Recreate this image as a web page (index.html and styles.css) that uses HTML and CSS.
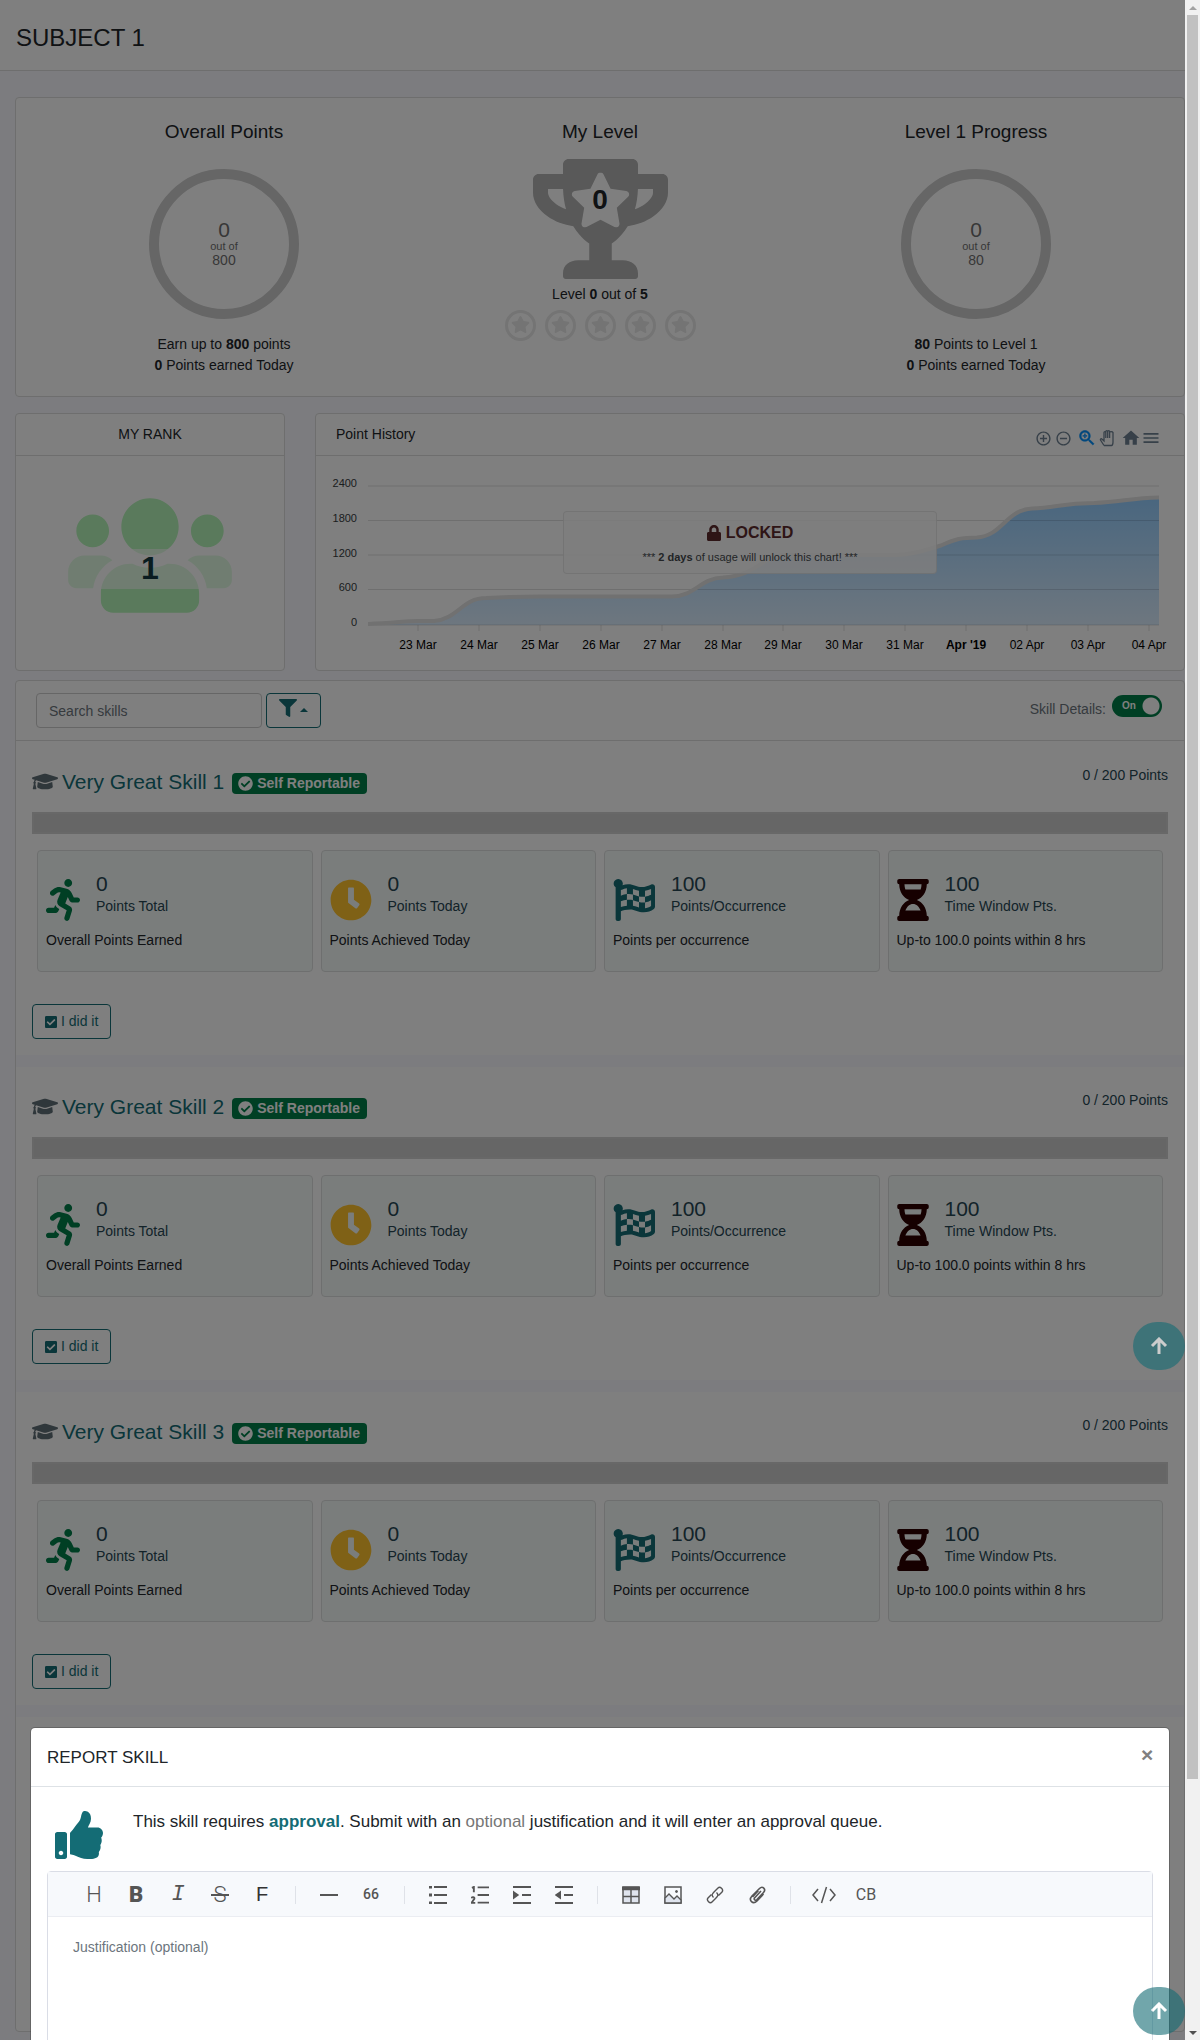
FILE: index.html
```html
<!DOCTYPE html>
<html lang="en">
<head>
<meta charset="utf-8">
<title>Subject 1</title>
<link rel="stylesheet" href="styles.css">
</head>
<body>
<svg width="0" height="0" class="sprite" aria-hidden="true">
  <symbol id="i-star" viewBox="0 0 576 512"><path d="M259.3 17.8L194 150.2 47.9 171.5c-26.2 3.8-36.7 36.1-17.7 54.6l105.7 103-25 145.5c-4.5 26.3 23.2 46 46.4 33.7L288 439.6l130.7 68.7c23.2 12.2 50.9-7.4 46.4-33.7l-25-145.5 105.7-103c19-18.5 8.5-50.8-17.7-54.6L382 150.2 316.7 17.8c-11.7-23.6-45.6-23.9-57.4 0z"/></symbol>
  <symbol id="i-level" viewBox="0 0 31 31"><circle cx="15.5" cy="15.5" r="14" fill="none" stroke="currentColor" stroke-width="3"/><use href="#i-star" x="6" y="6" width="19" height="17"/></symbol>
  <symbol id="i-cap" viewBox="0 0 640 512"><path d="M622.34 153.2L343.4 67.5c-15.2-4.67-31.6-4.67-46.79 0L17.66 153.2c-23.54 7.23-23.54 38.36 0 45.59l48.63 14.94c-10.67 13.19-17.23 29.28-17.88 46.9C38.78 266.15 32 276.11 32 288c0 10.78 5.68 19.85 13.86 25.65L20.33 428.53C18.11 438.52 25.71 448 35.94 448h56.11c10.24 0 17.84-9.48 15.62-19.47L82.14 313.65C90.32 307.85 96 298.78 96 288c0-11.57-6.47-21.25-15.66-26.87.76-15.02 8.44-28.3 20.69-36.72L296.6 284.5c9.06 2.78 26.44 6.25 46.79 0l278.95-85.7c23.55-7.24 23.55-38.36 0-45.6zM352.79 315.09c-28.53 8.76-52.84 3.92-65.59 0l-145.02-44.55L128 384c0 35.35 85.96 64 192 64s192-28.65 192-64l-14.18-113.47-145.03 44.56z"/></symbol>
  <symbol id="i-run" viewBox="0 0 416 512"><path d="M272 96c26.51 0 48-21.49 48-48S298.51 0 272 0s-48 21.49-48 48 21.49 48 48 48zM113.69 317.47l-14.8 34.52H32c-17.67 0-32 14.33-32 32s14.33 32 32 32h77.45c19.25 0 36.58-11.44 44.11-29.09l8.79-20.52-10.67-6.3c-17.32-10.23-30.06-25.37-37.99-42.61zM384 223.99h-44.03l-26.06-53.25c-12.5-25.55-35.45-44.23-61.78-50.94l-71.08-21.14c-28.3-6.8-57.77-.55-80.84 17.14l-39.67 30.41c-14.03 10.75-16.69 30.83-5.92 44.86s30.84 16.66 44.86 5.92l39.69-30.41c7.67-5.89 17.44-8 25.27-6.14l14.7 4.37-37.46 87.39c-12.62 29.48-1.31 64.01 26.3 80.31l84.98 50.17-27.47 87.73c-5.28 16.86 4.11 34.82 20.97 40.09 3.19 1 6.41 1.48 9.58 1.48 13.61 0 26.23-8.77 30.52-22.45l31.64-101.06c5.91-20.77-2.89-43.08-21.64-54.39l-61.24-36.14 31.31-78.28 20.27 41.43c8 16.34 24.92 26.89 43.11 26.89H384c17.67 0 32-14.33 32-32s-14.33-31.99-32-31.99z"/></symbol>
  <symbol id="i-clock" viewBox="0 0 512 512"><path d="M256 8C119 8 8 119 8 256s111 248 248 248 248-111 248-248S393 8 256 8zm57.1 350.1L224.9 294c-3.1-2.3-4.9-5.9-4.9-9.7V116c0-6.6 5.4-12 12-12h48c6.6 0 12 5.4 12 12v137.7l63.5 46.2c5.4 3.9 6.5 11.4 2.6 16.8l-28.2 38.8c-3.9 5.3-11.4 6.5-16.8 2.6z"/></symbol>
  <symbol id="i-flag" viewBox="0 0 512 512"><path d="M243.2 189.9V258c26.1 5.9 49.3 15.6 73.6 22.3v-68.2c-26-5.8-49.4-15.5-73.6-22.2zm223.3-123c-34.3 15.9-76.5 31.9-117 31.9C296 98.8 251.7 64 184.3 64c-25 0-47.3 4.4-68 12 2.8-7.3 4.1-15.2 3.6-23.6C118.1 24 94.8 1.2 66.3 0 34.3-1.3 8 24.3 8 56c0 19 9.5 35.8 24 45.9V488c0 13.3 10.7 24 24 24h16c13.3 0 24-10.7 24-24v-94.4c28.3-12.1 63.6-22.1 114.4-22.1 53.6 0 97.8 34.8 165.2 34.8 48.2 0 86.7-16.3 122.5-40.9 8.7-6 13.8-15.8 13.8-26.4V95.9c.1-23.3-24.2-38.8-45.4-29zM169.6 325.5c-25.8 2.7-50 8.2-73.6 16.6v-70.5c26.2-9.3 47.5-15 73.6-17.4v71.3zM464 191c-23.6 9.8-46.3 19.5-73.6 23.9V286c24.8-3.4 51.4-11.8 73.6-26v70.5c-25.1 16.1-48.5 24.7-73.6 27.1V286c-27 3.7-47.9 1.5-73.6-5.6v67.4c-23.9-7.4-47.3-16.7-73.6-21.3V258c-19.7-4.4-40.8-6.8-73.6-3.8v-70c-22.4 3.1-44.6 10.2-73.6 20.9v-70.5c33.2-12.2 50.1-19.8 73.6-22v71.6c27-3.7 48.4-1.3 73.6 5.7v-67.4c23.7 7.4 47.2 16.7 73.6 21.3v68.4c23.7 5.3 47.6 6.9 73.6 2.7V143c27-4.8 52.3-13.6 73.6-22.5z"/></symbol>
  <symbol id="i-glass" viewBox="0 0 384 512"><path d="M360 0H24C10.745 0 0 10.745 0 24v16c0 13.255 10.745 24 24 24 0 90.965 51.016 167.734 120.842 192C75.016 280.266 24 357.035 24 448c-13.255 0-24 10.745-24 24v16c0 13.255 10.745 24 24 24h336c13.255 0 24-10.745 24-24v-16c0-13.255-10.745-24-24-24 0-90.965-51.016-167.734-120.842-192C308.984 231.734 360 154.965 360 64c13.255 0 24-10.745 24-24V24c0-13.255-10.745-24-24-24zm-75.078 384H99.08c17.059-46.797 52.096-80 92.92-80 40.821 0 75.862 33.196 92.922 80zm.019-256H99.078C91.988 108.548 88 86.748 88 64h208c0 22.805-3.987 44.587-11.059 64z"/></symbol>
  <symbol id="i-ok" viewBox="0 0 512 512"><path d="M504 256c0 136.967-111.033 248-248 248S8 392.967 8 256 119.033 8 256 8s248 111.033 248 248zM227.314 387.314l184-184c6.248-6.248 6.248-16.379 0-22.627l-22.627-22.627c-6.248-6.249-16.379-6.249-22.628 0L216 308.118l-70.059-70.059c-6.248-6.248-16.379-6.248-22.628 0l-22.627 22.627c-6.248 6.248-6.248 16.379 0 22.627l104 104c6.249 6.249 16.379 6.249 22.628.001z"/></symbol>
  <symbol id="i-check" viewBox="0 0 448 512"><path d="M400 480H48c-26.51 0-48-21.49-48-48V80c0-26.51 21.49-48 48-48h352c26.51 0 48 21.49 48 48v352c0 26.51-21.49 48-48 48zm-204.686-98.059l184-184c6.248-6.248 6.248-16.379 0-22.627l-22.627-22.627c-6.248-6.248-16.379-6.249-22.628 0L184 302.745l-70.059-70.059c-6.248-6.248-16.379-6.248-22.628 0l-22.627 22.627c-6.248 6.248-6.248 16.379 0 22.627l104 104c6.249 6.25 16.379 6.25 22.628.001z"/></symbol>
  <symbol id="i-up" viewBox="0 0 18 18"><path d="M9 17V2M2 9l7-7 7 7" fill="none" stroke="currentColor" stroke-width="3"/></symbol>
</svg>

<div class="window">
  <div class="view">
    <header class="page-head"><h1>SUBJECT 1</h1></header>

    <main class="content">
      <section class="card summary">
        <div class="summary-col">
          <h2>Overall Points</h2>
          <div class="ring"><span class="ring-value">0</span><span class="ring-of">out of</span><span class="ring-total">800</span></div>
          <p>Earn up to <b>800</b> points</p>
          <p><b>0</b> Points earned Today</p>
        </div>
        <div class="summary-col">
          <h2>My Level</h2>
          <div class="trophy">
            <svg viewBox="0 0 576 512" width="135" height="120" aria-hidden="true"><path fill="#b2b2b2" d="M552 64H448V24c0-13.3-10.7-24-24-24H152c-13.3 0-24 10.700-24 24v40H24C10.700 64 0 74.700 0 88v56c0 35.700 22.500 72.400 61.900 100.700 31.500 22.700 69.800 37.100 110 41.700C203.300 338.500 240 360 240 360v72h-48c-35.300 0-64 20.700-64 56v12c0 6.600 5.400 12 12 12h296c6.600 0 12-5.400 12-12v-12c0-35.300-28.700-56-64-56h-48v-72s36.700-21.500 68.100-73.600c40.300-4.600 78.600-19 110-41.700 39.300-28.300 61.900-65 61.900-100.700V88c0-13.300-10.700-24-24-24zM99.300 192.800C74.900 175.200 64 155.600 64 144v-16h64.200c1 32.600 5.800 61.200 12.800 86.200-15.100-5.200-29.200-12.400-41.700-21.400zM512 144c0 16.100-17.700 36.100-35.300 48.800-12.500 9-26.700 16.200-41.800 21.400 7-25 11.800-53.600 12.800-86.200H512v16z"/><use href="#i-star" x="156" y="58" width="264" height="234" fill="#fff"/></svg>
            <strong>0</strong>
          </div>
          <p class="level">Level <b>0</b> out of <b>5</b></p>
          <div class="stars">
            <svg><use href="#i-level"/></svg><svg><use href="#i-level"/></svg><svg><use href="#i-level"/></svg><svg><use href="#i-level"/></svg><svg><use href="#i-level"/></svg>
          </div>
        </div>
        <div class="summary-col">
          <h2>Level 1 Progress</h2>
          <div class="ring"><span class="ring-value">0</span><span class="ring-of">out of</span><span class="ring-total">80</span></div>
          <p><b>80</b> Points to Level 1</p>
          <p><b>0</b> Points earned Today</p>
        </div>
      </section>

      <div class="panels">
        <section class="card">
          <div class="card-head rank-head"><h3>MY RANK</h3></div>
          <div class="rank">
            <div class="rank-icon">
              <svg viewBox="0 0 640 512" width="164" height="131" aria-hidden="true"><path fill="#b4f4b8" d="M96 224c35.300 0 64-28.700 64-64s-28.700-64-64-64-64 28.700-64 64 28.700 64 64 64zm448 0c35.300 0 64-28.700 64-64s-28.700-64-64-64-64 28.700-64 64 28.700 64 64 64zm32 32h-64c-17.600 0-33.500 7.100-45.100 18.600 40.300 22.100 68.900 62 75.100 109.400h66c17.700 0 32-14.300 32-32v-32c0-35.300-28.700-64-64-64zm-256 0c61.900 0 112-50.100 112-112S381.900 32 320 32 208 82.100 208 144s50.100 112 112 112zm76.800 32h-8.300c-20.800 10-43.900 16-68.500 16s-47.600-6-68.500-16h-8.300C179.600 288 128 339.600 128 403.200V432c0 26.500 21.500 48 48 48h288c26.500 0 48-21.500 48-48v-28.800c0-63.600-51.600-115.200-115.200-115.200zm-223.700-13.400C161.500 263.100 145.600 256 128 256H64c-35.300 0-64 28.700-64 64v32c0 17.700 14.300 32 32 32h65.900c6.300-47.400 34.900-87.300 75.200-109.400z"/></svg>
              <strong>1</strong>
            </div>
          </div>
        </section>

        <section class="card">
          <div class="card-head">
            <h3>Point History</h3>
            <div class="chart-tools">
              <button aria-label="Zoom in"><svg viewBox="0 0 24 24" width="17" height="17"><path d="M13 7h-2v4H7v2h4v4h2v-4h4v-2h-4V7zm-1-5C6.480 2 2 6.480 2 12s4.480 10 10 10 10-4.480 10-10S17.520 2 12 2zm0 18c-4.410 0-8-3.590-8-8s3.590-8 8-8 8 3.590 8 8-3.590 8-8 8z"/></svg></button>
              <button aria-label="Zoom out"><svg viewBox="0 0 24 24" width="17" height="17"><path d="M7 11v2h10v-2H7zm5-9C6.480 2 2 6.480 2 12s4.480 10 10 10 10-4.480 10-10S17.520 2 12 2zm0 18c-4.410 0-8-3.590-8-8s3.590-8 8-8 8 3.590 8 8-3.590 8-8 8z"/></svg></button>
              <button class="active" aria-label="Selection zoom"><svg viewBox="0 0 24 24" width="20" height="20"><path d="M15.500 14h-.79l-.28-.27C15.410 12.590 16 11.110 16 9.500 16 5.910 13.090 3 9.500 3S3 5.910 3 9.500 5.910 16 9.500 16c1.610 0 3.090-.59 4.230-1.570l.27.28v.79l5 4.990L20.490 19l-4.990-5zm-6 0C7.010 14 5 11.990 5 9.500S7.010 5 9.500 5 14 7.010 14 9.500 11.990 14 9.500 14zm.5-7H9v2H7v1h2v2h1v-2h2V9h-2z" stroke="currentColor" stroke-width=".6"/></svg></button>
              <button aria-label="Pan"><svg viewBox="0 0 16 18" width="16" height="18"><path d="M5 16.500L1.500 11C1 9.500 2.500 9.500 3.200 10.300L5 12V3.500M5 10V3.500c0-1.200 1.800-1.200 1.800 0V9V2.500c0-1.200 1.900-1.200 1.900 0V9V2.500c0-1.200 1.900-1.200 1.900 0V9V3.500M10.600 9V3.500c0-1.200 3-1 3.400 0V13c0 2-1 3.500-1.500 3.500H5" fill="none" stroke="#6e8192" stroke-width="1.300"/></svg></button>
              <button aria-label="Reset"><svg viewBox="0 0 24 24" width="20" height="20"><path d="M10 20v-6h4v6h5v-8h3L12 3 2 12h3v8z"/></svg></button>
              <button aria-label="Menu"><svg viewBox="0 0 24 24" width="20" height="20"><path d="M3 18h18v-2H3v2zm0-5h18v-2H3v2zm0-7v2h18V6H3z"/></svg></button>
            </div>
          </div>
          <div class="chart">
            <svg class="plot" viewBox="0 0 868 214" role="img">
              <defs><linearGradient id="area" x1="0" y1="0" x2="0" y2="1"><stop offset="0" stop-color="#93cdff"/><stop offset="1" stop-color="#dceeff"/></linearGradient></defs>
              <path fill="url(#area)" d="M52 168C78 167 90 165 102 165H118C142 163 146 142 170 142C190 141 200 140.500 224 140.500H356C380 140 384 122 407 121.500C440 120 445 101 467 99H580C600 99 612 93 625 89.500C640 83 645 81.500 661 81.500C686 80 690 54 716 52.500C740 52 745 47 778 47C805 46 815 42 843 41.500V169H52z"/>
              <path class="grid" d="M52 30H843M52 64.500H843M52 99H843M52 133.500H843M52 169H843M102 169V175M163 169V175M224 169V175M285 169V175M346 169V175M407 169V175M467 169V175M528 169V175M589 169V175M650 169V175M711 169V175M772 169V175M833 169V175"/>
              <path class="line" d="M52 168C78 167 90 165 102 165H118C142 163 146 142 170 142C190 141 200 140.500 224 140.500H356C380 140 384 122 407 121.500C440 120 445 101 467 99H580C600 99 612 93 625 89.500C640 83 645 81.500 661 81.500C686 80 690 54 716 52.500C740 52 745 47 778 47C805 46 815 42 843 41.500"/>
              <g class="y-labels"><text x="41" y="31">2400</text><text x="41" y="66">1800</text><text x="41" y="101">1200</text><text x="41" y="135">600</text><text x="41" y="170">0</text></g>
              <g class="x-labels"><text x="102" y="193">23 Mar</text><text x="163" y="193">24 Mar</text><text x="224" y="193">25 Mar</text><text x="285" y="193">26 Mar</text><text x="346" y="193">27 Mar</text><text x="407" y="193">28 Mar</text><text x="467" y="193">29 Mar</text><text x="528" y="193">30 Mar</text><text x="589" y="193">31 Mar</text><text x="650" y="193" class="month">Apr '19</text><text x="711" y="193">02 Apr</text><text x="772" y="193">03 Apr</text><text x="833" y="193">04 Apr</text></g>
            </svg>
            <div class="locked">
              <div class="locked-title"><svg viewBox="0 0 448 512" width="14" height="16"><path d="M400 224h-24v-72C376 68.200 307.800 0 224 0S72 68.200 72 152v72H48c-26.500 0-48 21.500-48 48v192c0 26.500 21.500 48 48 48h352c26.500 0 48-21.500 48-48V272c0-26.500-21.500-48-48-48zm-104 0H152v-72c0-39.700 32.300-72 72-72s72 32.300 72 72v72z"/></svg>LOCKED</div>
              <div class="locked-note">*** <b>2 days</b> of usage will unlock this chart! ***</div>
            </div>
          </div>
        </section>
      </div>

      <section class="card skills">
        <div class="skills-head">
          <input class="search" type="text" placeholder="Search skills" aria-label="Search skills">
          <button class="outline filter" aria-label="Filter"><svg viewBox="0 0 512 512" width="18" height="18"><path d="M487.976 0H24.028C2.710 0-8.047 25.866 7.058 40.971L192 225.941V432c0 7.831 3.821 15.170 10.237 19.662l80 55.980C298.020 518.690 320 507.493 320 487.980V225.941l184.947-184.970C520.021 25.896 509.338 0 487.976 0z"/></svg><i></i></button>
          <label class="details">Skill Details:<span class="switch"><input type="checkbox" checked><span>On</span></span></label>
        </div>
        <div class="skill-list">
          <article class="skill">
            <div class="skill-top">
              <h3><svg class="cap"><use href="#i-cap"/></svg><a href="#">Very Great Skill 1</a><span class="badge"><svg><use href="#i-ok"/></svg>Self Reportable</span></h3>
              <span class="points">0 / 200 Points</span>
            </div>
            <div class="bar"></div>
            <div class="stats">
              <div class="stat"><div class="stat-main"><svg class="run"><use href="#i-run"/></svg><div><div class="num">0</div><div>Points Total</div></div></div><p>Overall Points Earned</p></div>
              <div class="stat"><div class="stat-main"><svg class="clock"><use href="#i-clock"/></svg><div><div class="num">0</div><div>Points Today</div></div></div><p>Points Achieved Today</p></div>
              <div class="stat"><div class="stat-main"><svg class="flag"><use href="#i-flag"/></svg><div><div class="num">100</div><div>Points/Occurrence</div></div></div><p>Points per occurrence</p></div>
              <div class="stat"><div class="stat-main"><svg class="glass"><use href="#i-glass"/></svg><div><div class="num">100</div><div>Time Window Pts.</div></div></div><p>Up-to 100.0 points within 8 hrs</p></div>
            </div>
            <button class="outline did"><svg><use href="#i-check"/></svg>I did it</button>
          </article>
          <article class="skill">
            <div class="skill-top">
              <h3><svg class="cap"><use href="#i-cap"/></svg><a href="#">Very Great Skill 2</a><span class="badge"><svg><use href="#i-ok"/></svg>Self Reportable</span></h3>
              <span class="points">0 / 200 Points</span>
            </div>
            <div class="bar"></div>
            <div class="stats">
              <div class="stat"><div class="stat-main"><svg class="run"><use href="#i-run"/></svg><div><div class="num">0</div><div>Points Total</div></div></div><p>Overall Points Earned</p></div>
              <div class="stat"><div class="stat-main"><svg class="clock"><use href="#i-clock"/></svg><div><div class="num">0</div><div>Points Today</div></div></div><p>Points Achieved Today</p></div>
              <div class="stat"><div class="stat-main"><svg class="flag"><use href="#i-flag"/></svg><div><div class="num">100</div><div>Points/Occurrence</div></div></div><p>Points per occurrence</p></div>
              <div class="stat"><div class="stat-main"><svg class="glass"><use href="#i-glass"/></svg><div><div class="num">100</div><div>Time Window Pts.</div></div></div><p>Up-to 100.0 points within 8 hrs</p></div>
            </div>
            <button class="outline did"><svg><use href="#i-check"/></svg>I did it</button>
            <button class="to-top in-list" aria-label="Back to top"><svg><use href="#i-up"/></svg></button>
          </article>
          <article class="skill">
            <div class="skill-top">
              <h3><svg class="cap"><use href="#i-cap"/></svg><a href="#">Very Great Skill 3</a><span class="badge"><svg><use href="#i-ok"/></svg>Self Reportable</span></h3>
              <span class="points">0 / 200 Points</span>
            </div>
            <div class="bar"></div>
            <div class="stats">
              <div class="stat"><div class="stat-main"><svg class="run"><use href="#i-run"/></svg><div><div class="num">0</div><div>Points Total</div></div></div><p>Overall Points Earned</p></div>
              <div class="stat"><div class="stat-main"><svg class="clock"><use href="#i-clock"/></svg><div><div class="num">0</div><div>Points Today</div></div></div><p>Points Achieved Today</p></div>
              <div class="stat"><div class="stat-main"><svg class="flag"><use href="#i-flag"/></svg><div><div class="num">100</div><div>Points/Occurrence</div></div></div><p>Points per occurrence</p></div>
              <div class="stat"><div class="stat-main"><svg class="glass"><use href="#i-glass"/></svg><div><div class="num">100</div><div>Time Window Pts.</div></div></div><p>Up-to 100.0 points within 8 hrs</p></div>
            </div>
            <button class="outline did"><svg><use href="#i-check"/></svg>I did it</button>
          </article>
          <div class="skill-rest"></div>
        </div>
      </section>
    </main>

    <div class="backdrop"></div>
    <div class="modal-layer">
      <div class="modal" role="dialog" aria-labelledby="report-title">
        <div class="modal-head"><h2 id="report-title">REPORT SKILL</h2><button class="close" aria-label="Close">×</button></div>
        <div class="modal-body">
          <div class="notice">
            <svg viewBox="0 0 512 512" width="48" height="48" aria-hidden="true"><path d="M104 224H24c-13.255 0-24 10.745-24 24v240c0 13.255 10.745 24 24 24h80c13.255 0 24-10.745 24-24V248c0-13.255-10.745-24-24-24zM64 472c-13.255 0-24-10.745-24-24s10.745-24 24-24 24 10.745 24 24-10.745 24-24 24zM384 81.452c0 42.416-25.970 66.208-33.277 94.548h101.723c33.397 0 59.397 27.746 59.553 58.098.084 17.938-7.546 37.249-19.439 49.197l-.11.11c9.836 23.337 8.237 56.037-9.308 79.469 8.681 25.895-.069 57.704-16.382 74.757 4.298 17.598 2.244 32.575-6.148 44.632C440.202 511.587 389.616 512 346.839 512l-2.845-.001c-48.287-.017-87.806-17.598-119.560-31.725-15.957-7.099-36.821-15.887-52.651-16.178-6.540-.12-11.783-5.457-11.783-11.998v-213.770c0-3.200 1.282-6.271 3.558-8.521 39.614-39.144 56.648-80.587 89.117-113.111 14.804-14.832 20.188-37.236 25.393-58.902C282.515 39.293 291.817 0 312 0c24 0 72 8 72 81.452z"/></svg>
            <p>This skill requires <b>approval</b>. Submit with an <span>optional</span> justification and it will enter an approval queue.</p>
          </div>
          <div class="editor">
            <div class="tools">
              <div class="tool-group">
                <button class="t-h">H</button><button class="t-b">B</button><button class="t-i">I</button><button class="t-s">S</button><button class="t-f">F</button>
              </div>
              <div class="tool-group">
                <button aria-label="Line"><svg viewBox="0 0 18 18"><path d="M0 9h18"/></svg></button><button class="t-q">66</button>
              </div>
              <div class="tool-group">
                <button aria-label="Bulleted list"><svg viewBox="0 0 18 18"><path d="M5 1h13M5 9h13M5 17h13"/><path d="M0 1h3M0 9h3M0 17h3" stroke-width="3"/></svg></button>
                <button aria-label="Numbered list"><svg viewBox="-1 0 19 18"><path d="M6 1h12M6 9h12M6 17h12M0 1.500L2 .5V6M-.5 12.500c.5-2 3.500-1.500 3 .5L-.5 17.300H3.500"/></svg></button>
                <button aria-label="Indent"><svg viewBox="0 0 18 18"><path d="M0 1h18M9 9h9M0 17h18"/><path d="M1 6.500L4.500 9 1 11.500z" fill="#555"/></svg></button>
                <button aria-label="Outdent"><svg viewBox="0 0 18 18"><path d="M0 1h18M9 9h9M0 17h18"/><path d="M5 6.500L1.500 9 5 11.500z" fill="#555"/></svg></button>
              </div>
              <div class="tool-group">
                <button aria-label="Table"><svg viewBox="0 0 18 18"><path d="M1 1h16v16H1zM1 10.500h16M9 4v13" fill="#dfe4ee" stroke-width="1.500"/><path d="M0 2.500h18" stroke-width="3.500"/></svg></button>
                <button aria-label="Image"><svg viewBox="0 0 18 18"><path d="M1 1h16v16H1z" fill="none" stroke-width="1.500"/><path d="M1 12l4-4 5 5 3-3 4 4v3H1z" fill="#dfe4ee" stroke-width="1.300"/><circle cx="12.500" cy="5.500" r="1" fill="#555" stroke-width="1"/></svg></button>
                <button aria-label="Link"><svg viewBox="0 0 18 18"><path d="M7.500 11.500C5 9 6.500 7.500 8 6l4-4c2-2 6 1.500 4 4l-3.500 3.500M10.500 6.500c2.500 2.500 1 4 -.5 5.500l-4 4c-2 2-6-1.500-4-4l3.500-3.500" fill="none" stroke-width="1.400"/></svg></button>
                <button aria-label="Attachment"><svg viewBox="0 0 18 18"><path d="M13 5L6.500 12c-1 1.500 1 3 2.200 1.800L15.500 6.500c3-3.500-1-7-4-4L4 10c-4 4.500 1 9 5 5l6.500-7M10.500 4.500L4.500 11" fill="none" stroke-width="1.600"/></svg></button>
              </div>
              <div class="tool-group">
                <button aria-label="Code"><svg class="wide" viewBox="0 0 24 18"><path d="M6 3L1 9l5 6M18 3l5 6-5 6M14.500 1l-5 16" fill="none" stroke-width="1.500"/></svg></button><button class="t-cb">CB</button>
              </div>
            </div>
            <textarea placeholder="Justification (optional)" aria-label="Justification"></textarea>
          </div>
        </div>
      </div>
      <button class="to-top in-modal" aria-label="Back to top"><svg><use href="#i-up"/></svg></button>
    </div>
  </div>
  <div class="scrollbar" aria-hidden="true">
    <i class="arrow-up"></i>
    <div class="track"><div class="thumb"></div></div>
    <i class="arrow-down"></i>
  </div>
</div>
</body>
</html>
```
FILE: styles.css
```css
* { box-sizing: border-box; }
body { margin: 0; background: #f8f9fe; color: #212529; font: 14px/21px "Liberation Sans", Arial, sans-serif; }
h1, h2, h3, p { margin: 0; font-weight: 400; }
button, input, textarea { font: inherit; }
button { padding: 0; border: 0; background: none; }
svg { display: block; fill: currentColor; }
.sprite { position: absolute; }

.window { display: flex; height: 100vh; overflow: hidden; }
.view { position: relative; flex: 1; min-width: 0; overflow: hidden; }

/* scrollbar */
.scrollbar { flex: 0 0 15px; display: flex; flex-direction: column; align-items: center; background: #f1f1f1; }
.track { flex: 1; width: 11px; }
.thumb { height: calc(88% - 5px); background: #c1c1c1; }
.arrow-up, .arrow-down { height: 15px; display: flex; align-items: center; }
.arrow-up::before, .arrow-down::before { content: ""; border: 4px solid transparent; }
.arrow-up::before { border-top: 0; border-bottom-color: #a3a3a3; }
.arrow-down::before { border-bottom: 0; border-top-color: #505050; }

/* page */
.page-head { padding: 24px 16px 18px; background: #fff; border-bottom: 1px solid #dcdcdc; }
.page-head h1 { font-size: 24px; line-height: 28px; }
.content { padding: 26px 0 8px 15px; }
.card { background: #fff; border: 1px solid #dcdcdc; border-radius: 4px; }

.summary { display: grid; grid-template-columns: repeat(3, 1fr); padding: 22px 20px 20px; text-align: center; }
.summary-col { display: flex; flex-direction: column; align-items: center; }
.summary h2 { font-size: 19px; line-height: 24px; }
.ring { width: 150px; height: 150px; margin: 25px 0 15px; border: 10px solid #ccc; border-radius: 50%; display: flex; flex-direction: column; align-items: center; justify-content: center; color: #6f6f6f; }
.ring-value { font-size: 21px; line-height: 20px; }
.ring-of { font-size: 11px; line-height: 12px; }
.ring-total { line-height: 16px; }
.trophy { position: relative; margin-top: 15px; }
.trophy strong { position: absolute; inset: 25px 0 auto; font-size: 28px; line-height: 32px; }
.level { margin: 5px 0; }
.stars { display: flex; gap: 9px; color: #e8e8e8; }
.stars svg { width: 31px; height: 31px; }

.panels { display: grid; grid-template-columns: minmax(200px, 270px) minmax(0, 1fr); gap: 30px; margin: 16px 0 9px; }
.card-head { display: flex; justify-content: space-between; align-items: flex-start; height: 42px; padding: 10px 23px 0 20px; border-bottom: 1px solid #dcdcdc; }
.card-head h3 { font-size: 14px; }
.card-head.rank-head { justify-content: center; padding-right: 20px; }
.rank { display: flex; justify-content: center; padding-top: 34px; }
.rank-icon { position: relative; }
.rank-icon strong { position: absolute; inset: 59px 0 auto; height: 40px; background: rgba(255,255,255,.6); color: #143840; font-size: 32px; line-height: 38px; text-align: center; }

.chart-tools { display: flex; padding-top: 4px; color: #6e8192; }
.chart-tools button { width: 20px; height: 20px; display: flex; align-items: center; justify-content: center; color: inherit; }
.chart-tools button:nth-child(3), .chart-tools button:nth-child(5) { margin-left: 4px; }
.chart-tools button.active { color: #008ffb; }
.chart { position: relative; }
.plot { width: 100%; height: auto; }
.grid { stroke: #000; stroke-opacity: .13; fill: none; }
.line { stroke: #e2e2e2; stroke-width: 4; fill: none; }
.y-labels { font-size: 11px; fill: #373d3f; text-anchor: end; }
.x-labels { font-size: 12px; fill: #000; text-anchor: middle; }
.month { font-weight: 700; }
.locked { position: absolute; top: 55px; left: 50%; width: 374px; margin-left: -187px; padding: 11px 0 8px; border: 1px solid rgba(0,0,0,.08); border-radius: 4px; background: rgba(252,252,252,.85); text-align: center; }
.locked-title { display: flex; justify-content: center; align-items: center; gap: 5px; font-size: 16px; line-height: 20px; font-weight: 700; color: #5c2a2c; }
.locked-note { margin-top: 6px; font-size: 11px; line-height: 16px; color: #45494d; }

/* skills */
.skills-head { display: flex; gap: 4px; align-items: flex-start; padding: 12px 22px 12px 20px; border-bottom: 1px solid #dcdcdc; }
.search { width: 226px; height: 35px; padding: 0 12px; border: 1px solid #ccc; border-radius: 4px; background: #fff; }
.search::placeholder { color: #6c757d; opacity: 1; }
.outline { display: flex; align-items: center; justify-content: center; height: 35px; border: 1px solid #146c75; border-radius: 4px; color: #146c75; }
.filter { width: 55px; gap: 3px; padding-bottom: 5px; }
.filter i { margin-top: 4px; border: 4px solid transparent; border-top: 0; border-bottom-color: #146c75; }
.details { display: flex; gap: 6px; margin-left: auto; padding-top: 2px; line-height: 28px; color: #6c757d; }
.switch { position: relative; width: 50px; height: 22px; color: #fff; font-size: 10px; line-height: 22px; font-weight: 700; }
.switch input { appearance: none; display: block; width: 50px; height: 22px; margin: 0; border-radius: 11px; background: radial-gradient(circle 9px at 39px 11px, #fff 8px, transparent 9px) #007e49; }
.switch span { position: absolute; left: 10px; top: 0; }

.skill-list { padding-top: 1px; }
.skill { position: relative; padding: 23px 16px 16px; border-bottom: 12px solid #f8f9fe; }
.skill-rest { height: 314px; }
.skill-top { display: flex; justify-content: space-between; align-items: flex-start; }
.skill h3 { display: flex; align-items: center; height: 25px; margin-top: 4px; font-size: 21px; line-height: 25px; }
.skill h3 a { margin: 0 8px 0 4px; color: #146c75; text-decoration: none; }
.cap { width: 26px; height: 21px; color: #5f6e76; }
.badge { display: flex; align-items: center; gap: 4px; height: 21px; margin-top: 4px; padding: 0 7px 0 6px; border-radius: 4px; background: #007e49; color: #fff; font-size: 14px; font-weight: 700; line-height: 21px; }
.badge svg { width: 15px; height: 15px; }
.points, .stat-main { color: #264653; }
.bar { height: 22px; margin: 18px 0 16px; border: 2px solid #d0d0d0; background: #ccc; }
.stats { display: grid; grid-template-columns: repeat(4, 1fr); gap: 8px; margin: 0 5px 32px; }
.stat { padding: 20px 8px; border: 1px solid #dcdfde; border-radius: 4px; background: #f5faf9; }
.stat-main { display: flex; gap: 16px; height: 50px; margin-bottom: 9px; }
.stat-main svg { align-self: flex-end; height: 42px; }
.num { font-size: 21px; line-height: 25px; }
.run { width: 34px; color: #007e49; }
.clock { width: 42px; color: #fec22c; }
.flag { width: 42px; color: #146c75; }
.glass { width: 32px; color: #2d0000; }
.did { gap: 4px; padding: 0 12px; }
.did svg { width: 12px; height: 14px; }

.to-top { position: absolute; z-index: 3; display: flex; align-items: center; justify-content: center; width: 52px; height: 48px; border-radius: 24px; background: #146c75; color: #fff; opacity: .6; }
.to-top svg { width: 18px; height: 18px; }
.in-list { right: -1px; bottom: 10px; }
.in-modal { right: 0; bottom: 5px; }

/* dialog */
.backdrop { position: absolute; inset: 0; z-index: 1; background: rgba(0,0,0,.5); }
.modal-layer { position: absolute; inset: 0; z-index: 4; overflow: hidden; padding: 1727px 15px 0 30px; pointer-events: none; }
.modal { border: 1px solid rgba(0,0,0,.2); border-radius: 5px; background: #fff; background-clip: padding-box; }
.modal-head { display: flex; justify-content: space-between; align-items: flex-start; padding: 17px 16px 15px; border-bottom: 1px solid #dee2e6; }
.modal-head h2 { font-size: 17px; line-height: 26px; }
.close { width: 12px; color: #808080; font-size: 21px; line-height: 20px; font-weight: 700; }
.modal-body { padding: 16px; }
.notice { display: flex; gap: 30px; padding: 8px 0 12px 8px; color: #146c75; }
.notice svg { flex: none; }
.notice p { margin-top: -2px; font-size: 17px; line-height: 26px; color: #212529; }
.notice b { color: #146c75; }
.notice span { color: #767676; }
.editor { border: 1px solid #dadde6; border-radius: 4px; }
.tools { display: flex; align-items: center; height: 45px; padding: 1px 0 0 30px; background: #f7f9fc; border-bottom: 1px solid #ebedf2; }
.tool-group { display: flex; gap: 10px; align-items: center; }
.tool-group + .tool-group { margin-left: 17px; padding-left: 18px; background: linear-gradient(#dfe2e8, #dfe2e8) left center / 1px 18px no-repeat; }
.tools button { position: relative; width: 32px; height: 32px; display: flex; align-items: center; justify-content: center; color: #555; font-family: Roboto, sans-serif; }
.tools svg { width: 18px; height: 18px; stroke: #555; stroke-width: 2; fill: none; }
.tools .wide { width: 24px; }
.tools .t-h { font-size: 22px; font-weight: 300; }
.tools .t-b { font-size: 22px; font-weight: 900; }
.tools .t-i { font: italic 22px "Liberation Mono", monospace; }
.tools .t-s { font-size: 22px; font-weight: 300; }
.t-s::after { content: ""; position: absolute; left: 7px; right: 7px; top: 15px; height: 2px; background: #555; }
.tools .t-f { font: 20px "Liberation Sans", sans-serif; color: #333; }
.tools .t-q { font-size: 14px; font-weight: 500; }
.tools .t-cb { font-size: 16px; }
textarea { display: block; width: 100%; height: 320px; padding: 20px 25px; border: 0; resize: none; line-height: 21px; background: #fff; }
textarea::placeholder { color: #6c757d; opacity: 1; }
```
